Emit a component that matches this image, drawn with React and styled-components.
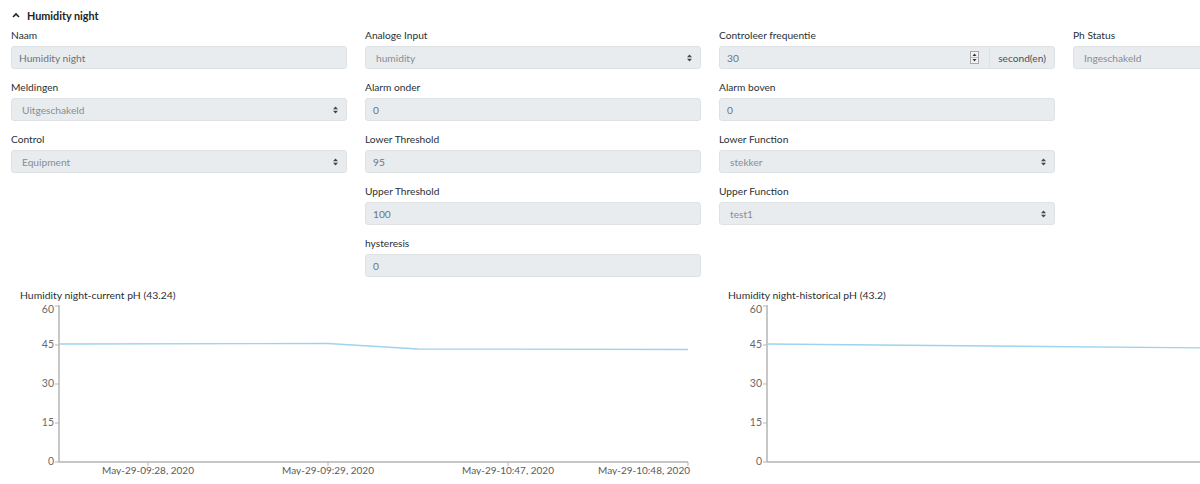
import React from "react";
import styled, { createGlobalStyle } from "styled-components";

const GlobalStyle = createGlobalStyle`
  html, body {
    margin: 0;
    padding: 0;
    background: #ffffff;
    overflow: hidden;
  }
  body {
    font-family: Lato, "Open Sans", "Liberation Sans", sans-serif;
    color: #212529;
  }
`;

const Page = styled.div`
  width: 1420px;
  padding: 7px 0 0 11px;
  box-sizing: border-box;
`;

const Header = styled.div`
  display: flex;
  align-items: center;
  gap: 7px;
  height: 16px;
  margin-bottom: 4px;
  padding-left: 1px;
  font-size: 10.8px;
  font-weight: 700;
  color: #222;
`;

const FormGrid = styled.div`
  display: grid;
  grid-template-columns: repeat(4, 336px);
  column-gap: 18px;
  align-items: start;
`;

const Column = styled.div`
  display: flex;
  flex-direction: column;
`;

const Field = styled.div`
  display: flex;
  flex-direction: column;
  margin-bottom: 10px;
`;

const Label = styled.div`
  font-size: 10.2px;
  line-height: 16px;
  height: 16px;
  margin-bottom: 3px;
  color: #2b2f33;
`;

const Control = styled.div`
  display: flex;
  align-items: center;
  height: 23px;
  box-sizing: border-box;
  background: #e9ecef;
  border: 1px solid #dfe2e5;
  border-radius: 3px;
  font-size: 10.2px;
  color: ${(p) => (p.$select ? "#878d93" : "#6c737a")};
  padding-left: ${(p) => (p.$select ? "10px" : "7px")};
  padding-right: ${(p) => (p.$select ? "8px" : "0")};
  justify-content: space-between;
  overflow: hidden;
`;

const GroupControl = styled(Control)`
  padding-right: 0;
`;

const NumberPart = styled.div`
  flex: 1;
  display: flex;
  align-items: center;
  justify-content: space-between;
  padding-right: 10px;
`;

const Append = styled.div`
  width: 64px;
  height: 100%;
  display: flex;
  align-items: center;
  justify-content: center;
  border-left: 1px solid #dfe2e5;
  color: #4a5056;
`;

const ChartRow = styled.div`
  display: grid;
  grid-template-columns: repeat(2, 690px);
  column-gap: 18px;
`;

const ChartBox = styled.div`
  display: flex;
  flex-direction: column;
`;

const ChartTitle = styled.div`
  font-size: 10.4px;
  line-height: 16px;
  height: 16px;
  padding-left: 9px;
  margin-bottom: 2px;
  color: #2b2f33;
`;

const ChartSvg = styled.svg`
  overflow: visible;
  font-family: Lato, "Open Sans", sans-serif;
`;

const Chevron = () => (
  <svg width="8" height="6" viewBox="0 0 8 6">
    <path d="M1 5 L4 2 L7 5" fill="none" stroke="#222" strokeWidth="1.6" />
  </svg>
);

const SelectArrow = () => (
  <svg width="5" height="8" viewBox="0 0 5 8">
    <path d="M0 3.2 L2.5 0.5 L5 3.2 Z" fill="#444" />
    <path d="M0 4.8 L2.5 7.5 L5 4.8 Z" fill="#444" />
  </svg>
);

const Spinner = () => (
  <svg width="9" height="13" viewBox="0 0 9 13">
    <rect x="0.5" y="0.5" width="8" height="12" fill="#f4f4f4" stroke="#a9a9a9" />
    <line x1="0.5" y1="6.5" x2="8.5" y2="6.5" stroke="#bdbdbd" />
    <path d="M2.5 5 L4.5 2.5 L6.5 5 Z" fill="#333" />
    <path d="M2.5 8 L4.5 10.5 L6.5 8 Z" fill="#333" />
  </svg>
);

const Input = ({ label, value }) => (
  <Field>
    <Label>{label}</Label>
    <Control>{value}</Control>
  </Field>
);

const Select = ({ label, value }) => (
  <Field>
    <Label>{label}</Label>
    <Control $select>
      <span>{value}</span>
      <SelectArrow />
    </Control>
  </Field>
);

const yTicks = [
  { v: 60, y: 1, ty: 5 },
  { v: 45, y: 40, ty: 40 },
  { v: 30, y: 79, ty: 79 },
  { v: 15, y: 118, ty: 118 },
  { v: 0, y: 157, ty: 157 },
];

const Chart = ({ title, points, xTicks }) => (
  <ChartBox>
    <ChartTitle>{title}</ChartTitle>
    <ChartSvg width="690" height="170" viewBox="0 0 690 170">
      <line x1="48" y1="0" x2="48" y2="157" stroke="#b5b5b5" strokeWidth="1.5" />
      <line x1="48" y1="157" x2="677" y2="157" stroke="#b5b5b5" strokeWidth="1.5" />
      {yTicks.map((t) => (
        <g key={t.v}>
          <line x1="44" y1={t.y} x2="48" y2={t.y} stroke="#b5b5b5" />
          <text
            x="43"
            y={t.ty}
            textAnchor="end"
            dominantBaseline="middle"
            fontSize="10.5"
            fill="#6a6a6a"
          >
            {t.v}
          </text>
        </g>
      ))}
      {xTicks.map((t) => (
        <g key={t.label}>
          <line x1={t.x} y1="157" x2={t.x} y2="161" stroke="#b5b5b5" />
          <text
            x={t.anchor === "end" ? t.x + 2 : t.x}
            y="166"
            textAnchor={t.anchor || "middle"}
            dominantBaseline="middle"
            fontSize="10"
            fill="#5a5a5a"
          >
            {t.label}
          </text>
        </g>
      ))}
      <polyline
        points={points}
        fill="none"
        stroke="#9dd3ee"
        strokeWidth="1.3"
      />
    </ChartSvg>
  </ChartBox>
);

export default function App() {
  return (
    <Page>
      <GlobalStyle />
      <Header>
        <Chevron />
        <span>Humidity night</span>
      </Header>
      <FormGrid>
        <Column>
          <Input label="Naam" value="Humidity night" />
          <Select label="Meldingen" value="Uitgeschakeld" />
          <Select label="Control" value="Equipment" />
        </Column>
        <Column>
          <Select label="Analoge Input" value="humidity" />
          <Input label="Alarm onder" value="0" />
          <Input label="Lower Threshold" value="95" />
          <Input label="Upper Threshold" value="100" />
          <Input label="hysteresis" value="0" />
        </Column>
        <Column>
          <Field>
            <Label>Controleer frequentie</Label>
            <GroupControl>
              <NumberPart>
                <span>30</span>
                <Spinner />
              </NumberPart>
              <Append>second(en)</Append>
            </GroupControl>
          </Field>
          <Input label="Alarm boven" value="0" />
          <Select label="Lower Function" value="stekker" />
          <Select label="Upper Function" value="test1" />
        </Column>
        <Column>
          <Select label="Ph Status" value="Ingeschakeld" />
        </Column>
      </FormGrid>
      <ChartRow>
        <Chart
          title="Humidity night-current pH (43.24)"
          points="48,39 317,38.5 407,44 677,44.5"
          xTicks={[
            { x: 137, label: "May-29-09:28, 2020" },
            { x: 317, label: "May-29-09:29, 2020" },
            { x: 497, label: "May-29-10:47, 2020" },
            { x: 677, label: "May-29-10:48, 2020", anchor: "end" },
          ]}
        />
        <Chart
          title="Humidity night-historical pH (43.2)"
          points="48,39 677,44.7"
          xTicks={[]}
        />
      </ChartRow>
    </Page>
  );
}
